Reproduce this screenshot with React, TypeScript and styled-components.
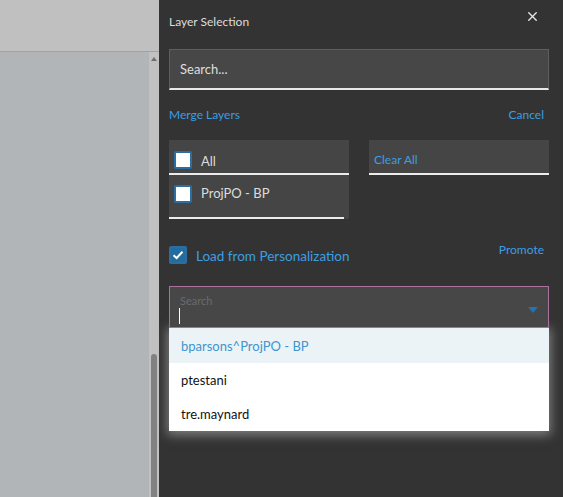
import React from "react";
import styled, { createGlobalStyle } from "styled-components";
import { X } from "lucide-react";

const Global = createGlobalStyle`
  html, body { margin: 0; padding: 0; width: 563px; height: 497px; overflow: hidden; }
  body { font-family: Lato, "Open Sans", sans-serif; }
  * { box-sizing: border-box; }
`;

const Page = styled.div`
  display: flex;
  width: 563px;
  height: 497px;
  overflow: hidden;
`;

const Left = styled.div`
  width: 159px;
  display: flex;
  flex-direction: column;
`;

const LeftHeader = styled.div`
  height: 52px;
  background: #c0c0c0;
  border-bottom: 1px solid #a2a2a2;
`;

const LeftBody = styled.div`
  flex: 1;
  display: flex;
`;

const Canvas = styled.div`
  flex: 1;
  background: #b2b5b7;
`;

const ScrollTrack = styled.div`
  width: 10px;
  background: #c1c1c1;
  display: flex;
  flex-direction: column;
  align-items: center;
  padding-top: 5px;
`;

const ScrollArrow = styled.div`
  width: 0;
  height: 0;
  border-left: 3px solid transparent;
  border-right: 3px solid transparent;
  border-bottom: 4px solid #6f6f6f;
  margin-left: -1px;
`;

const ScrollThumb = styled.div`
  margin-top: auto;
  width: 6px;
  height: 143px;
  border-radius: 3px 3px 0 0;
  background: #828282;
  margin-left: -1px;
`;

const Panel = styled.div`
  flex: 1;
  background: #333333;
  padding: 0 14px 0 10px;
  color: #dddddd;
  display: flex;
  flex-direction: column;
`;

const TitleRow = styled.div`
  display: flex;
  justify-content: space-between;
  align-items: flex-start;
  height: 49px;
  padding-top: 14px;
`;

const Title = styled.div`
  font-size: 12px;
  color: #dcdcdc;
`;

const CloseBtn = styled.div`
  color: #e6e6e6;
  margin-right: 9px;
  margin-top: -5px;
  display: flex;
`;

const SearchBox = styled.div`
  height: 41px;
  background: #474747;
  border: 1px solid #5e5e5e;
  border-bottom: 2px solid #e8e8e8;
  padding-left: 10px;
  display: flex;
  align-items: center;
  font-size: 13px;
  color: #dedede;
`;

const LinkRow = styled.div<{ $top: number; $align?: string }>`
  display: flex;
  justify-content: space-between;
  align-items: ${(p) => p.$align || "center"};
  margin-top: ${(p) => p.$top}px;
  padding-right: 5px;
`;

const Link = styled.span<{ $size?: number; $offset?: number }>`
  color: #3d9ee2;
  font-size: ${(p) => p.$size || 12}px;
  margin-top: ${(p) => p.$offset || 0}px;
`;

const Columns = styled.div`
  display: grid;
  grid-template-columns: 180px 180px;
  column-gap: 20px;
  margin-top: 18px;
  align-items: start;
`;

const ListBox = styled.div`
  background: #454545;
  display: flex;
  flex-direction: column;
`;

const ListRow = styled.div<{ $h: number; $lineInset?: number }>`
  height: ${(p) => p.$h}px;
  display: flex;
  align-items: ${(p) => (p.$lineInset ? "flex-start" : "center")};
  padding: ${(p) => (p.$lineInset ? "10px 0 0 5px" : "4px 0 0 5px")};
  position: relative;
  font-size: 13px;
  color: #dddddd;
  &::after {
    content: "";
    position: absolute;
    left: 0;
    right: ${(p) => p.$lineInset || 0}px;
    bottom: 0;
    height: 2px;
    background: #ececec;
  }
`;

const RowText = styled.span<{ $offset?: number }>`
  margin-top: ${(p) => p.$offset || 0}px;
`;

const Box = styled.span<{ $checked?: boolean }>`
  width: 18px;
  height: 18px;
  border-radius: 2px;
  border: 2px solid #2b6ea3;
  background: ${(p) => (p.$checked ? "#236c9f" : "#ffffff")};
  display: inline-flex;
  align-items: center;
  justify-content: center;
  margin-right: 9px;
  flex-shrink: 0;
`;

const ClearBox = styled.div`
  height: 35px;
  background: #454545;
  border-bottom: 2px solid #ececec;
  padding: 8px 0 0 5px;
`;

const LoadLabel = styled.div`
  display: flex;
  align-items: center;
  margin-top: 9px;
`;

const Select = styled.div`
  margin-top: 22px;
  height: 42px;
  background: #474747;
  border: 1px solid #a9729c;
  padding: 7px 10px 0 10px;
  position: relative;
`;

const Placeholder = styled.div`
  font-size: 11px;
  color: #6b6b6b;
  line-height: 14px;
`;

const Caret = styled.div`
  width: 1px;
  height: 16px;
  background: #ffffff;
  margin-left: -1px;
`;

const Triangle = styled.div`
  position: absolute;
  right: 10px;
  top: 20px;
  width: 0;
  height: 0;
  border-left: 5px solid transparent;
  border-right: 5px solid transparent;
  border-top: 6px solid #2274b4;
`;

const Menu = styled.div`
  background: #ffffff;
  box-shadow: 0 2px 10px 2px rgba(190, 190, 190, 0.55);
  display: flex;
  flex-direction: column;
`;

const MenuItem = styled.div<{ $active?: boolean }>`
  height: 34px;
  display: flex;
  align-items: center;
  padding-left: 12px;
  font-size: 13px;
  background: ${(p) => (p.$active ? "#ecf3f6" : "#ffffff")};
  color: ${(p) => (p.$active ? "#3d95d0" : "#111111")};
  &:first-child { height: 35px; }
`;

const Check = () => (
  <svg width="12" height="10" viewBox="0 0 12 10">
    <path d="M1.5 5.2 L4.6 8 L10.5 1.8" fill="none" stroke="#fff" strokeWidth="2" />
  </svg>
);

export default function App() {
  return (
    <Page>
      <Global />
      <Left>
        <LeftHeader />
        <LeftBody>
          <Canvas />
          <ScrollTrack>
            <ScrollArrow />
            <ScrollThumb />
          </ScrollTrack>
        </LeftBody>
      </Left>
      <Panel>
        <TitleRow>
          <Title>Layer Selection</Title>
          <CloseBtn>
            <X size={15} strokeWidth={2.2} />
          </CloseBtn>
        </TitleRow>
        <SearchBox>Search...</SearchBox>
        <LinkRow $top={17}>
          <Link>Merge Layers</Link>
          <Link>Cancel</Link>
        </LinkRow>
        <Columns>
          <ListBox>
            <ListRow $h={35}>
              <Box />
              <RowText $offset={2}>All</RowText>
            </ListRow>
            <ListRow $h={44} $lineInset={5}>
              <Box />
              <RowText>ProjPO - BP</RowText>
            </ListRow>
          </ListBox>
          <ClearBox>
            <Link>Clear All</Link>
          </ClearBox>
        </Columns>
        <LinkRow $top={18} $align="flex-start">
          <LoadLabel>
            <Box $checked>
              <Check />
            </Box>
            <Link $size={13.5} $offset={2}>Load from Personalization</Link>
          </LoadLabel>
          <Link $offset={5}>Promote</Link>
        </LinkRow>
        <Select>
          <Placeholder>Search</Placeholder>
          <Caret />
          <Triangle />
        </Select>
        <Menu>
          <MenuItem $active>bparsons^ProjPO - BP</MenuItem>
          <MenuItem>ptestani</MenuItem>
          <MenuItem>tre.maynard</MenuItem>
        </Menu>
      </Panel>
    </Page>
  );
}
